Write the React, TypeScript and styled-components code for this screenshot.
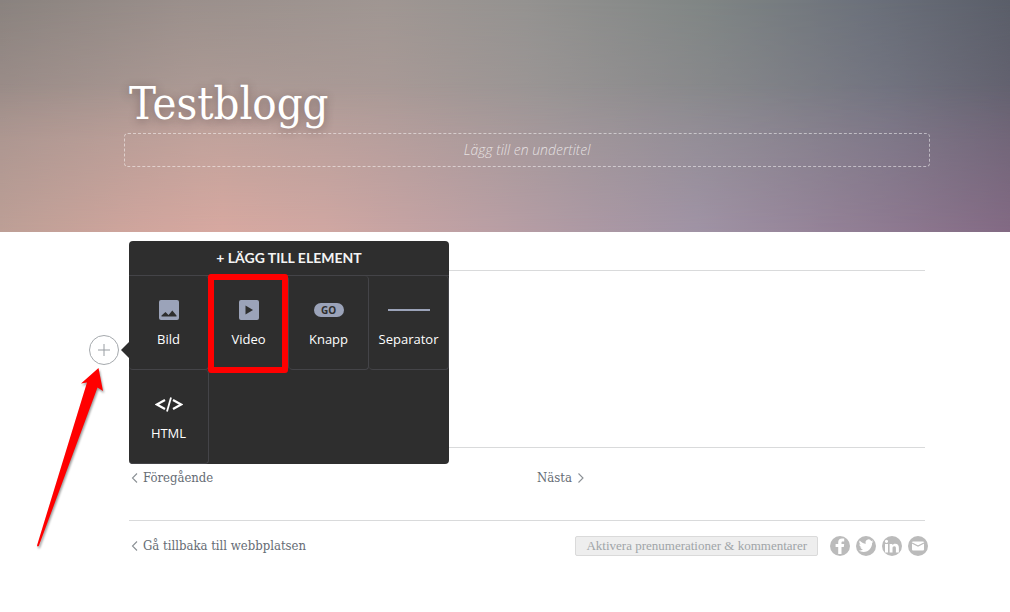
import React from 'react';
import styled, { createGlobalStyle, css } from 'styled-components';

const serif = '"DejaVu Serif Condensed", "DejaVu Serif", serif';
const sans = '"Open Sans", sans-serif';

const GlobalStyle = createGlobalStyle`
  *, *::before, *::after { box-sizing: border-box; }
  body { margin: 0; background: #fff; font-family: ${serif}; color: #666c74; }
  button { font: inherit; color: inherit; margin: 0; padding: 0; border: 0; background: none; cursor: pointer; }
  h1, h2 { margin: 0; font-weight: 400; }
`;

const Hero = styled.header`
  position: relative;
  isolation: isolate;
  display: flex;
  flex-direction: column;
  min-height: 232px;
  padding: 74px 80px 65px 124px;
  background: linear-gradient(90deg, #a4928e 0%, #b6a09a 20%, #ae9c99 38%, #9d9797 54%, #88878d 74%, #777784 88%, #686473 100%);

  &::before, &::after {
    content: "";
    position: absolute;
    inset: 0;
    z-index: -1;
  }
  &::before {
    background: linear-gradient(90deg, #89827e 0%, #9a8f8b 18%, #9f9692 38%, #949290 52%, #7f8584 70%, #6b707a 86%, #5a5e69 100%);
    mask-image: linear-gradient(180deg, #000, transparent 60%);
  }
  &::after {
    background: linear-gradient(90deg, #bd9f96 0%, #d0a59d 14%, #d7a8a0 22%, #d0a7a2 32%, #bb9fa4 48%, #ad99a4 58%, #a093a5 69%, #927f95 84%, #836a84 100%);
    mask-image: linear-gradient(0deg, #000, transparent 64%);
  }
`;

const BlogTitle = styled.h1`
  padding-left: 5px;
  font-size: 45px;
  line-height: 60px;
  margin-bottom: -1px;
  color: #fff;
  text-shadow: 0 2px 10px rgba(60, 40, 40, 0.45);
`;

const Subtitle = styled.button`
  && {
    height: 34px;
    border: 1px dashed rgba(255, 255, 255, 0.5);
    border-radius: 4px;
    font: italic 300 14px/20px ${sans};
    color: rgba(255, 255, 255, 0.72);
  }
`;

const Page = styled.main`
  padding: 38px 85px 40px 129px;
`;

const Editor = styled.section`
  position: relative;
  height: 177px;
  border-top: 1px solid #d9dadb;
`;

const AddButton = styled.button`
  && {
    position: absolute;
    top: 64px;
    left: -40px;
    display: grid;
    place-items: center;
    width: 30px;
    height: 30px;
    border: 1px solid #a5a9ad;
    border-radius: 50%;
    background: #fff;
    color: #989da2;
  }
`;

const Popover = styled.div`
  position: absolute;
  top: -30px;
  left: 0;
  width: 320px;
  border-radius: 4px;
  background: #2e2e2e;
  color: #fff;

  &::before {
    content: "";
    position: absolute;
    top: 101px;
    left: -8px;
    border: 8px solid transparent;
    border-left: 0;
    border-right-color: #2e2e2e;
  }
`;

const PopoverTitle = styled.h2`
  height: 35px;
  border-bottom: 1px solid #444448;
  font: 700 14px/34px Lato, sans-serif;
  text-align: center;
  color: #f4f4f4;
`;

const Tiles = styled.div`
  display: grid;
  grid-template-columns: repeat(4, 1fr);
`;

const Tile = styled.button<{ $marked?: boolean }>`
  && {
    position: relative;
    display: flex;
    flex-direction: column;
    align-items: center;
    height: 94px;
    padding-top: 19px;
    border-right: 1px solid #444448;
    border-bottom: 1px solid #444448;
    border-radius: 4px;
    font: 400 13px/18px ${sans};
  }
  ${(p) => p.$marked && css`
    &::after {
      content: "";
      position: absolute;
      inset: -2px 0 -4px -1px;
      border: 6px solid #f00;
      border-radius: 3px;
    }
  `}
`;

const TileIcon = styled.span`
  display: grid;
  place-items: center;
  height: 30px;
  margin-bottom: 5px;
`;

const GoPill = styled.span`
  width: 30px;
  height: 14px;
  border-radius: 7px;
  background: #9ba3b9;
  font: 700 10px/14px ${sans};
  color: #2e2e2e;
  text-align: center;
`;

const Rule = styled.span`
  width: 42px;
  height: 2px;
  background: #9ba3b9;
`;

const Row = styled.nav`
  display: grid;
  grid-template-columns: 1fr 1fr;
  height: 73px;
  padding-top: 20px;
  border-top: 1px solid #d9dadb;
`;

const NavLink = styled.a<{ $next?: boolean }>`
  display: flex;
  align-items: center;
  align-self: start;
  gap: ${(p) => (p.$next ? 5 : 4)}px;
  padding-left: ${(p) => (p.$next ? 10 : 2)}px;
  font-size: 13px;
  line-height: 20px;
  color: inherit;
  text-decoration: none;
  svg { color: #8b9095; }
`;

const Footer = styled.footer`
  display: flex;
  align-items: center;
  justify-content: space-between;
  margin-right: -3px;
  padding-top: 16px;
  background: linear-gradient(#d9dadb, #d9dadb) 0 0 / calc(100% - 3px) 1px no-repeat;
`;

const Actions = styled.div`
  display: flex;
  align-items: center;
  gap: 6px;
`;

const SubscribeButton = styled.button`
  && {
    height: 20px;
    margin-right: 6px;
    padding: 0 10px;
    border: 1px solid #dadada;
    border-radius: 2px;
    background: #eee;
    font: 400 13px/18px "Liberation Serif", serif;
    color: #a0a5a8;
  }
`;

const Social = styled.a`
  display: block;
  width: 20px;
  height: 20px;
  border-radius: 50%;
  overflow: hidden;
  background: #bbb;
  color: #fff;
  svg { display: block; }
`;

const Annotation = styled.svg`
  position: absolute;
  top: 92px;
  left: -99px;
  pointer-events: none;
  filter: drop-shadow(1px 2px 1px rgba(0, 0, 0, 0.4));
`;

const Chevron = ({ next }: { next?: boolean }) => (
  <svg width="8" height="12" viewBox="0 0 8 12" fill="none" stroke="currentColor" strokeWidth="1.1" aria-hidden="true">
    <path d={next ? 'M1.5 1.5 6 6 1.5 10.5' : 'M6 1.5 1.500 6l4.500 4.500'} />
  </svg>
);

const ImageIcon = () => (
  <svg width="20" height="20" viewBox="0 0 20 20" aria-hidden="true">
    <rect width="20" height="20" rx="2" fill="#9ba3b9" />
    <path d="M2.5 16.500V15.500L6.500 12l3 3L13.300 10.500 17.500 15.500v1z" fill="#2e2e2e" />
  </svg>
);

const VideoIcon = () => (
  <svg width="20" height="20" viewBox="0 0 20 20" aria-hidden="true">
    <rect width="20" height="20" rx="2" fill="#9ba3b9" />
    <path d="M6.5 5.5v9l7.5-4.5z" fill="#2e2e2e" />
  </svg>
);

const CodeIcon = () => (
  <svg width="28" height="16" viewBox="0 0 28 16" fill="none" stroke="#fff" aria-hidden="true">
    <path d="M10 4 1.800 8.500l8.200 4.500M18 4l8.200 4.500-8.200 4.500" strokeWidth="2.300" />
    <path d="M16 1.500l-4 14" strokeWidth="1.800" />
  </svg>
);

const socials = [
  {
    label: 'Facebook',
    art: <path d="M8.200 18v-7H5.600V8h2.600V6.300C8.200 3.900 9.500 2.500 12 2.500h2.200v2.900h-1.400c-1 0-1.300.4-1.300 1.300V8h2.700l-.4 3h-2.300v7z" />,
  },
  {
    label: 'Twitter',
    art: <path d="M17.500 5.400c-.6.3-1.100.4-1.700.4.6-.4 1-.9 1.300-1.600-.6.3-1.200.6-1.900.7A3 3 0 0 0 9.900 7.700C7.500 7.600 5.200 6.400 3.700 4.500c-.8 1.400-.3 3.200 1 4.100-.5 0-1-.2-1.400-.4 0 1.500 1 2.700 2.400 3-.4.1-.9.100-1.400 0 .4 1.200 1.500 2.100 2.900 2.100-1.300 1-2.800 1.400-4.400 1.300 1.300.9 3 1.400 4.700 1.400 5.700 0 8.800-4.800 8.600-9.200.6-.4 1-.8 1.400-1.400z" />,
  },
  {
    label: 'LinkedIn',
    art: <path d="M3 8h3v8.500H3zM4.500 3.700a1.600 1.600 0 1 1 0 3.200 1.600 1.600 0 0 1 0-3.200zM7.600 8h2.800v1.200C10.900 8.300 11.900 7.700 13.200 7.700c2.800 0 3.700 1.700 3.700 4.200v4.600h-3V12.400c0-1.300-.3-2.200-1.600-2.200s-1.800.9-1.800 2.200v4.100H7.600z" />,
  },
  {
    label: 'E-post',
    art: (
      <>
        <rect x="4" y="5.500" width="12" height="9" rx="1" />
        <path d="M4 7l6 3 6-3" fill="none" stroke="#bbb" strokeWidth="1.200" />
      </>
    ),
  },
];

export default function App() {
  return (
    <>
      <GlobalStyle />
      <Hero>
        <BlogTitle>Testblogg</BlogTitle>
        <Subtitle type="button">Lägg till en undertitel</Subtitle>
      </Hero>
      <Page>
        <Editor>
          <AddButton type="button" aria-label="Lägg till element">
            <svg width="12" height="12" viewBox="0 0 12 12" stroke="currentColor" aria-hidden="true">
              <path d="M6 0v12M0 6h12" />
            </svg>
          </AddButton>
          <Popover>
            <PopoverTitle>+ LÄGG TILL ELEMENT</PopoverTitle>
            <Tiles>
              <Tile type="button"><TileIcon><ImageIcon /></TileIcon>Bild</Tile>
              <Tile type="button" $marked><TileIcon><VideoIcon /></TileIcon>Video</Tile>
              <Tile type="button"><TileIcon><GoPill>GO</GoPill></TileIcon>Knapp</Tile>
              <Tile type="button"><TileIcon><Rule /></TileIcon>Separator</Tile>
              <Tile type="button"><TileIcon><CodeIcon /></TileIcon>HTML</Tile>
            </Tiles>
          </Popover>
          <Annotation width="80" height="190" viewBox="0 0 80 190" aria-hidden="true">
            <path d="M68.500 5 51 20.500 57 19.500 7 182.500Q7.500 184 8.800 183L67.500 24.500 73 28z" fill="#f00" />
          </Annotation>
        </Editor>
        <Row aria-label="Inlägg">
          <NavLink href="#prev"><Chevron />Föregående</NavLink>
          <NavLink href="#next" $next>Nästa<Chevron next /></NavLink>
        </Row>
        <Footer>
          <NavLink href="#site"><Chevron />Gå tillbaka till webbplatsen</NavLink>
          <Actions>
            <SubscribeButton type="button">Aktivera prenumerationer &amp; kommentarer</SubscribeButton>
            {socials.map((s) => (
              <Social key={s.label} href={`#${s.label.toLowerCase()}`} aria-label={s.label}>
                <svg width="20" height="20" viewBox="0 0 20 20" fill="currentColor" aria-hidden="true">{s.art}</svg>
              </Social>
            ))}
          </Actions>
        </Footer>
      </Page>
    </>
  );
}
